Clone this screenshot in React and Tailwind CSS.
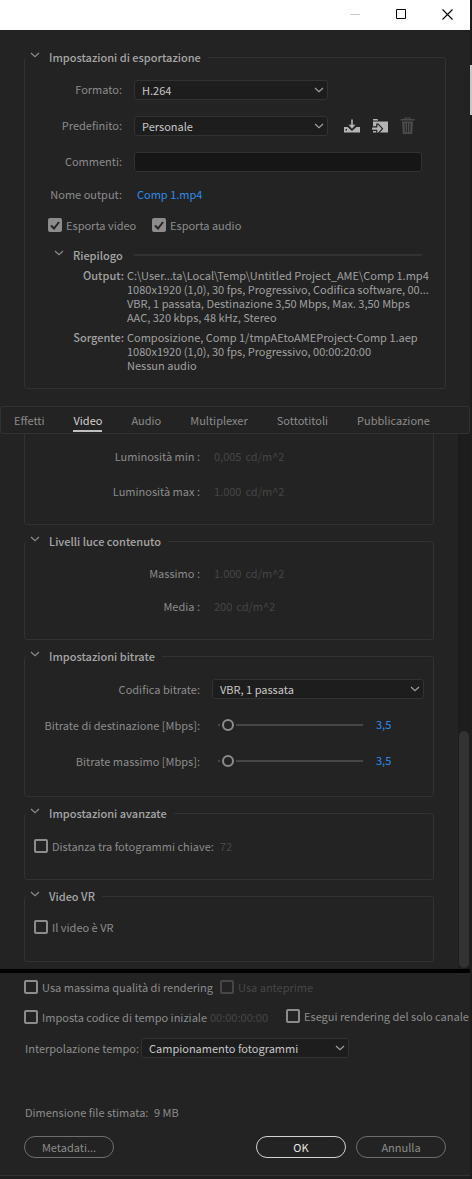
import { useState } from "react";

function ChevronDown({ className = "" }) {
  return (
    <svg viewBox="0 0 10 6" fill="none" stroke="currentColor" strokeWidth="1.2" className={`h-[6px] w-[10px] ${className}`}>
      <path d="M1 1l4 3.6L9 1" />
    </svg>
  );
}

function Group({ title, className = "", children }) {
  return (
    <fieldset className={`min-w-0 rounded-[3px] border border-[#323232] ${className}`}>
      <legend className="ml-px pr-[7px] pl-1">
        <button type="button" className="flex h-[14px] items-center gap-[9px] font-medium text-[#a6a6a6]">
          <ChevronDown className="mb-1 text-[#8c8c8c]" />
          {title}
        </button>
      </legend>
      {children}
    </fieldset>
  );
}

function Select({ id, options, className = "" }) {
  return (
    <div className={`relative ${className}`}>
      <select
        id={id}
        className="block h-5 w-full appearance-none rounded-[3px] border border-[#323232] bg-[#1d1d1d] pr-6 pl-[7px] leading-[18px] text-[#c8c8c8]"
      >
        {options.map((option) => (
          <option key={option}>{option}</option>
        ))}
      </select>
      <ChevronDown className="pointer-events-none absolute top-[7px] right-1 text-[#a0a0a0]" />
    </div>
  );
}

function Checkbox({ label, defaultChecked = false, disabled = false, className = "" }) {
  return (
    <label className={`flex items-center gap-1 whitespace-nowrap ${disabled ? "text-[#464646]" : ""} ${className}`}>
      <span className="relative flex">
        <input
          type="checkbox"
          defaultChecked={defaultChecked}
          disabled={disabled}
          className="peer h-[14px] w-[14px] appearance-none rounded-[2px] border-2 border-[#8c8c8c] checked:bg-[#8c8c8c] disabled:border-[#464646]"
        />
        <svg
          viewBox="0 0 14 14"
          fill="none"
          stroke="#232323"
          strokeWidth="2"
          className="pointer-events-none absolute inset-0 hidden peer-checked:block"
        >
          <path d="M3 7.5l3 3L11 4" />
        </svg>
      </span>
      {label}
    </label>
  );
}

function FormRow({ label, htmlFor, children }) {
  return (
    <div className="flex h-5 items-center gap-3">
      <label htmlFor={htmlFor} className="w-[97px] shrink-0 pb-[2px] text-right whitespace-nowrap">
        {label}
      </label>
      {children}
    </div>
  );
}

function ValueRow({ id, label, value, unit }) {
  return (
    <div className="flex h-5 items-center pb-[2px] text-[#464646]">
      <label htmlFor={id} className="mr-[14px] w-[175px] shrink-0 text-right whitespace-nowrap text-[#8c8c8c]">
        {label}
      </label>
      <input id={id} defaultValue={value} disabled className="field-sizing-content" />
      <span className="ml-1">{unit}</span>
    </div>
  );
}

function SliderRow({ id, label }) {
  const [value, setValue] = useState(3.5);

  return (
    <div className="flex h-5 items-center">
      <label htmlFor={id} className="mr-[18px] w-[175px] shrink-0 text-right whitespace-nowrap">
        {label}
      </label>
      <input
        id={id}
        type="range"
        min="0"
        max="110"
        step="0.1"
        value={value}
        onChange={(e) => setValue(Number(e.target.value))}
        className="h-3 min-w-0 flex-1 appearance-none bg-transparent [&::-webkit-slider-runnable-track]:h-[2px] [&::-webkit-slider-runnable-track]:bg-[#464646] [&::-webkit-slider-thumb]:-mt-[5px] [&::-webkit-slider-thumb]:h-3 [&::-webkit-slider-thumb]:w-3 [&::-webkit-slider-thumb]:appearance-none [&::-webkit-slider-thumb]:rounded-full [&::-webkit-slider-thumb]:border-2 [&::-webkit-slider-thumb]:border-[#8c8c8c] [&::-webkit-slider-thumb]:bg-[#232323] [&::-webkit-slider-thumb]:shadow-[0_0_0_2px_#232323]"
      />
      <output htmlFor={id} className="w-[70px] shrink-0 pb-[2px] pl-[13px] text-[#2d8ceb]">
        {value.toFixed(1).replace(".", ",")}
      </output>
    </div>
  );
}

function TitleBar() {
  return (
    <div className="flex h-[30px] items-center justify-end gap-[35px] bg-white pr-[17px] pb-[2px] text-black">
      <button type="button" aria-label="Riduci a icona" className="text-[#cccccc]">
        <svg viewBox="0 0 11 11" stroke="currentColor" className="h-[11px] w-[11px]">
          <path d="M0 5.5h10" />
        </svg>
      </button>
      <button type="button" aria-label="Ingrandisci">
        <svg viewBox="0 0 11 11" fill="none" stroke="currentColor" className="h-[11px] w-[11px]">
          <path d="M.5 .5h9v9h-9z" />
        </svg>
      </button>
      <button type="button" aria-label="Chiudi">
        <svg viewBox="0 0 11 11" stroke="currentColor" strokeWidth="1.1" className="h-[11px] w-[11px]">
          <path d="M.5 .5l10 10M10.5 .5l-10 10" />
        </svg>
      </button>
    </div>
  );
}

function PresetActions() {
  return (
    <div className="ml-1 flex items-center gap-3">
      <button type="button" aria-label="Salva predefinito" className="text-[#b4b4b4]">
        <svg viewBox="0 0 16 16" fill="currentColor" className="h-4 w-4">
          <path d="M0 9h3.500l4.500 4 4.500-4H16v5.500H0zM1.500 11v1.500H3V11z" fillRule="evenodd" />
          <path d="M7.200 1.500h1.600v5.300h2.700L8 10.800 4.500 6.800h2.700z" />
        </svg>
      </button>
      <button type="button" aria-label="Importa predefinito" className="text-[#b4b4b4]">
        <svg viewBox="0 0 16 16" fill="currentColor" className="h-4 w-4">
          <path d="M1 1h4.500l.8 1.500H1z" />
          <path d="M1 3.500h15v11H1z" />
          <path
            d="M-.5 8.800h5.300V6.200h1.400l4.300 4.500-4.300 4.600H4.800v-2.900H-.5z"
            stroke="#232323"
            strokeWidth="1.200"
          />
        </svg>
      </button>
      <button type="button" aria-label="Elimina predefinito" disabled className="text-[#4b4b4b]">
        <svg viewBox="0 0 16 18" fill="currentColor" className="h-[18px] w-4">
          <path d="M.5 2h4V.5h6V2h4v1.500H.5zM5.700 1.500V2h3.600v-.5z" fillRule="evenodd" />
          <path d="M2 4.500h11l-.8 12.500H2.800z" />
          <path d="M5 6l.4 9.500M7.500 6v9.500M10 6l-.4 9.500" stroke="#232323" strokeWidth=".9" />
        </svg>
      </button>
    </div>
  );
}

const summary = [
  {
    label: "Output:",
    lines: [
      "C:\\User...ta\\Local\\Temp\\Untitled Project_AME\\Comp 1.mp4",
      "1080x1920 (1,0), 30 fps, Progressivo, Codifica software, 00...",
      "VBR, 1 passata, Destinazione 3,50 Mbps, Max. 3,50 Mbps",
      "AAC, 320 kbps, 48 kHz, Stereo",
    ],
  },
  {
    label: "Sorgente:",
    lines: [
      "Composizione, Comp 1/tmpAEtoAMEProject-Comp 1.aep",
      "1080x1920 (1,0), 30 fps, Progressivo, 00:00:20:00",
      "Nessun audio",
    ],
  },
];

function ExportSettings() {
  return (
    <Group title="Impostazioni di esportazione" className="mx-6 mt-5 pb-4">
      <div className="mt-4 flex flex-col gap-4">
        <FormRow label="Formato:" htmlFor="format">
          <Select id="format" options={["H.264"]} className="w-[194px]" />
        </FormRow>
        <FormRow label="Predefinito:" htmlFor="preset">
          <Select id="preset" options={["Personale"]} className="w-[194px]" />
          <PresetActions />
        </FormRow>
        <FormRow label="Commenti:" htmlFor="comments">
          <input
            id="comments"
            type="text"
            className="mr-[23px] h-5 min-w-0 flex-1 rounded-[3px] border border-[#323232] bg-[#161616] px-2"
          />
        </FormRow>
      </div>

      <div className="mt-3 flex h-5 items-center gap-[15px]">
        <span className="w-[97px] text-right">Nome output:</span>
        <a href="#output" className="text-[#2d8ceb]">
          Comp 1.mp4
        </a>
      </div>

      <div className="mt-[11px] ml-[23px] flex h-5 items-center">
        <Checkbox label="Esporta video" defaultChecked className="w-[104px]" />
        <Checkbox label="Esporta audio" defaultChecked />
      </div>

      <div className="mt-[10px] mr-[23px] ml-[29px] flex h-5 items-center">
        <button type="button" className="flex w-20 items-center gap-[9px] font-medium text-[#a6a6a6]">
          <ChevronDown className="mb-1 text-[#8c8c8c]" />
          Riepilogo
        </button>
        <div className="h-[2px] flex-1 bg-[#323232]" />
      </div>

      <dl className="mt-[3px] flex flex-col gap-[6px] text-[#a0a0a0]">
        {summary.map((item) => (
          <div key={item.label} className="flex gap-[3px]">
            <dt className="w-[99px] shrink-0 text-right font-medium">{item.label}</dt>
            <dd className="whitespace-nowrap">
              {item.lines.map((line) => (
                <p key={line}>{line}</p>
              ))}
            </dd>
          </div>
        ))}
      </dl>
    </Group>
  );
}

const tabs = ["Effetti", "Video", "Audio", "Multiplexer", "Sottotitoli", "Pubblicazione"];

function Tabs() {
  const [active, setActive] = useState("Video");

  return (
    <div role="tablist" className="mt-[17px] flex h-7 gap-[29px] rounded-[3px] border border-[#323232] pl-[13px]">
      {tabs.map((tab) => (
        <button
          key={tab}
          type="button"
          role="tab"
          aria-selected={tab === active}
          onClick={() => setActive(tab)}
          className="mb-px border-b-2 border-transparent pt-[3px] aria-selected:border-[#c0c0c0] aria-selected:text-[#d2d2d2]"
        >
          {tab}
        </button>
      ))}
    </div>
  );
}

function VideoSettings() {
  return (
    <div className="flex">
      <div className="flex min-w-0 flex-1 flex-col gap-[9px] px-6 pb-[7px]">
        <div className="flex flex-col gap-[15px] rounded-b-[3px] border border-t-0 border-[#323232] pt-[13px] pb-[22px]">
          <ValueRow id="lum-min" label="Luminosità min :" value="0,005" unit="cd/m^2" />
          <ValueRow id="lum-max" label="Luminosità max :" value="1.000" unit="cd/m^2" />
        </div>

        <Group title="Livelli luce contenuto" className="pb-[22px]">
          <div className="mt-4 flex flex-col gap-[13px]">
            <ValueRow id="light-max" label="Massimo :" value="1.000" unit="cd/m^2" />
            <ValueRow id="light-avg" label="Media :" value="200" unit="cd/m^2" />
          </div>
        </Group>

        <Group title="Impostazioni bitrate" className="pb-[25px]">
          <div className="mt-4 flex flex-col gap-4">
            <div className="flex h-5 items-center gap-3">
              <label htmlFor="encoding" className="w-[175px] shrink-0 text-right">
                Codifica bitrate:
              </label>
              <Select id="encoding" options={["VBR, 1 passata"]} className="mr-[9px] min-w-0 flex-1" />
            </div>
            <SliderRow id="target" label="Bitrate di destinazione [Mbps]:" />
            <SliderRow id="maximum" label="Bitrate massimo [Mbps]:" />
          </div>
        </Group>

        <Group title="Impostazioni avanzate" className="pb-[23px]">
          <div className="mt-4 ml-[9px] flex h-5 items-center gap-[6px]">
            <Checkbox label="Distanza tra fotogrammi chiave:" />
            <input aria-label="Distanza" defaultValue="72" disabled className="field-sizing-content text-[#464646]" />
          </div>
        </Group>

        <Group title="Video VR" className="pb-6">
          <div className="mt-[14px] ml-[9px] flex h-5 items-center">
            <Checkbox label="Il video è VR" />
          </div>
        </Group>
      </div>

      {/* scrollbar */}
      <div className="flex w-3 shrink-0 flex-col justify-end bg-[#1d1d1d] px-px pb-px">
        <div className="h-[237px] rounded-full bg-[#323232]" />
      </div>
    </div>
  );
}

function Footer() {
  return (
    <div className="border-t-4 border-black px-6 pt-1 pb-[17px]">
      <div className="flex h-5 items-center">
        <Checkbox label="Usa massima qualità di rendering" className="w-[196px]" />
        <Checkbox label="Usa anteprime" disabled />
      </div>
      <div className="mt-[10px] flex h-5 items-center">
        <Checkbox label="Imposta codice di tempo iniziale" className="w-[186px] shrink-0" />
        <input
          aria-label="Codice di tempo"
          defaultValue="00:00:00:00"
          disabled
          className="w-[76px] shrink-0 text-[#464646]"
        />
        <Checkbox label="Esegui rendering del solo canale alfa" className="pb-[2px]" />
      </div>
      <div className="mt-[11px] flex h-5 items-center">
        <label htmlFor="interpolation" className="w-[117px] shrink-0 pl-px whitespace-nowrap">
          Interpolazione tempo:
        </label>
        <Select id="interpolation" options={["Campionamento fotogrammi"]} className="w-[208px]" />
      </div>
      <p className="mt-[47px] ml-px">
        Dimensione file stimata: <span className="ml-[3px]">9 MB</span>
      </p>
      <div className="mt-[17px] flex gap-[10px]">
        <button type="button" className="mr-auto h-[22px] w-[90px] rounded-full border border-[#6e6e6e]">
          Metadati...
        </button>
        <button type="button" className="h-[22px] w-[90px] rounded-full border border-[#d2d2d2] text-[#e6e6e6]">
          OK
        </button>
        <button type="button" className="h-[22px] w-[90px] rounded-full border border-[#6e6e6e]">
          Annulla
        </button>
      </div>
    </div>
  );
}

export default function App() {
  return (
    <div className="flex min-h-screen bg-[#1c1c1c] font-['Noto_Sans_CJK_SC',sans-serif] text-[11px] leading-[14px] text-[#8c8c8c]">
      <main className="min-w-0 flex-1 overflow-hidden bg-[#232323]">
        <TitleBar />
        <ExportSettings />
        <Tabs />
        <VideoSettings />
        <Footer />
        <div className="h-1 border-t border-[#323232] bg-[#1f1f1f]" />
      </main>
      {/* edge of the window behind */}
      <div className="w-[2px] shrink-0 pt-[65px]">
        <div className="h-[50px] bg-[#c8c8c8]" />
      </div>
    </div>
  );
}
